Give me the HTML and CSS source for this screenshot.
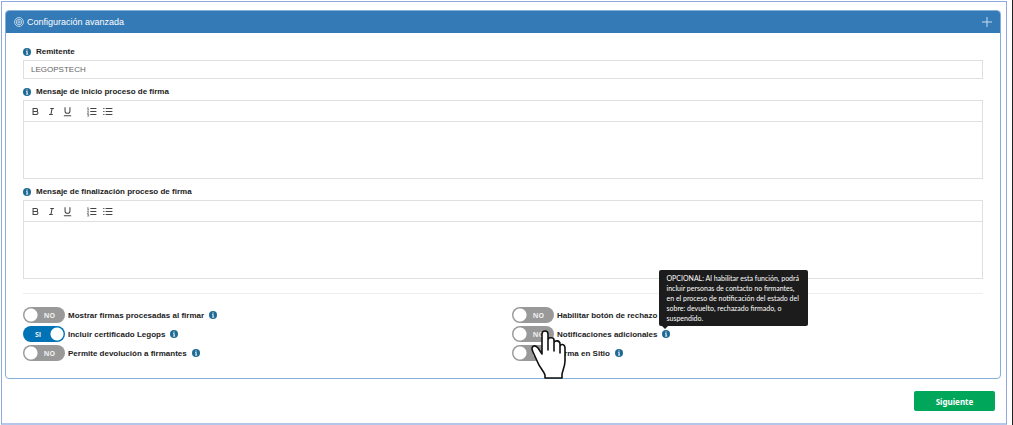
FILE: index.html
```html
<!DOCTYPE html>
<html lang="es">
<head>
    <meta charset="UTF-8">
    <meta name="viewport" content="width=device-width, initial-scale=1.0">
    <title>Configuración avanzada</title>
    <link rel="stylesheet" href="styles.css">
</head>
<body>
    <!-- Shared icons -->
    <svg class="sprite" aria-hidden="true">
        <symbol id="icon-info" viewBox="0 0 16 16">
            <circle cx="8" cy="8" r="8" fill="#1f6a94"/>
            <path d="M6 6.5h3.2v5h1.2v1.3H6v-1.3h1.2V7.800H6z M6.900 3h2.300v2.200H6.900z" fill="#fff"/>
        </symbol>
        <symbol id="icon-bold" viewBox="0 0 18 18">
            <path d="M5 4h5a2.500 2.500 0 0 1 0 5H5zM5 9h5.500a2.500 2.500 0 0 1 0 5H5z"/>
        </symbol>
        <symbol id="icon-italic" viewBox="0 0 18 18">
            <path d="M7 4h6M5 14h6M8 14l2-10"/>
        </symbol>
        <symbol id="icon-underline" viewBox="0 0 18 18">
            <path d="M5 2v6a4 4 0 0 0 8 0V2M3 16h12"/>
        </symbol>
        <symbol id="icon-ordered" viewBox="0 0 18 18">
            <path d="M7 4h10M7 9h10M7 14h10"/>
            <path d="M2 3.500l1.500-1v4M2 6.500h3M2 9h2v1.500L2 12h2.500M2 14h2.500v2.500H2" stroke-width="1"/>
        </symbol>
        <symbol id="icon-bullet" viewBox="0 0 18 18">
            <path d="M6 4h11M6 9h11M6 14h11M2 4h2M2 9h2M2 14h2"/>
        </symbol>
    </svg>

    <main class="page">
        <section class="panel">
            <header class="panel-header">
                <svg class="gear" viewBox="0 0 18 18" aria-hidden="true">
                    <circle cx="9" cy="9" r="8"/>
                    <circle cx="9" cy="9" r="5"/>
                    <circle cx="9" cy="9" r="2"/>
                </svg>
                <h1>Configuración avanzada</h1>
                <button type="button" class="expand" aria-label="Expandir">
                    <svg viewBox="0 0 10 10"><path d="M5 0v10M0 5h10"/></svg>
                </button>
            </header>

            <form class="panel-body" id="config-form">
                <div class="field">
                    <label for="remitente"><svg class="info"><use href="#icon-info"/></svg>Remitente</label>
                    <input type="text" id="remitente" class="form-control" value="LEGOPSTECH">
                </div>

                <div class="field">
                    <label for="inicio"><svg class="info"><use href="#icon-info"/></svg>Mensaje de inicio proceso de firma</label>
                    <div class="editor">
                        <div class="toolbar">
                            <button type="button" aria-label="Negrita"><svg><use href="#icon-bold"/></svg></button>
                            <button type="button" aria-label="Cursiva"><svg><use href="#icon-italic"/></svg></button>
                            <button type="button" aria-label="Subrayado"><svg><use href="#icon-underline"/></svg></button>
                            <button type="button" class="group" aria-label="Lista numerada"><svg><use href="#icon-ordered"/></svg></button>
                            <button type="button" aria-label="Lista"><svg><use href="#icon-bullet"/></svg></button>
                        </div>
                        <textarea id="inicio"></textarea>
                    </div>
                </div>

                <div class="field">
                    <label for="fin"><svg class="info"><use href="#icon-info"/></svg>Mensaje de finalización proceso de firma</label>
                    <div class="editor">
                        <div class="toolbar">
                            <button type="button" aria-label="Negrita"><svg><use href="#icon-bold"/></svg></button>
                            <button type="button" aria-label="Cursiva"><svg><use href="#icon-italic"/></svg></button>
                            <button type="button" aria-label="Subrayado"><svg><use href="#icon-underline"/></svg></button>
                            <button type="button" class="group" aria-label="Lista numerada"><svg><use href="#icon-ordered"/></svg></button>
                            <button type="button" aria-label="Lista"><svg><use href="#icon-bullet"/></svg></button>
                        </div>
                        <textarea id="fin"></textarea>
                    </div>
                </div>

                <hr>

                <div class="options">
                    <div class="option">
                        <span class="switch"><input type="checkbox" id="mostrar"><span class="state no">NO</span></span>
                        <label for="mostrar">Mostrar firmas procesadas al firmar</label>
                        <svg class="info"><use href="#icon-info"/></svg>
                    </div>
                    <div class="option">
                        <span class="switch"><input type="checkbox" id="rechazo"><span class="state no">NO</span></span>
                        <label for="rechazo">Habilitar botón de rechazo</label>
                        <svg class="info"><use href="#icon-info"/></svg>
                    </div>
                    <div class="option">
                        <span class="switch"><input type="checkbox" id="certificado" checked><span class="state si">SI</span></span>
                        <label for="certificado">Incluir certificado Legops</label>
                        <svg class="info"><use href="#icon-info"/></svg>
                    </div>
                    <div class="option">
                        <span class="switch">
                            <input type="checkbox" id="notificaciones"><span class="state no">NO</span>
                            <!-- Hand pointer over the switch -->
                            <svg class="pointer" viewBox="0 0 36 50" aria-hidden="true">
                                <path d="M14 48V45C13 41 9 38 7 33L2 22C-1 16 4 14 7 18L11 24V4C11 0 17 0 17 4V20V10C17 7 23 7 23 10V21V13C23 10 29 10 29 14V23V17C29 13 34 14 34 18V31C34 37 31 41 31 45V48Z"/>
                            </svg>
                        </span>
                        <label for="notificaciones">Notificaciones adicionales</label>
                        <span class="info-wrap">
                            <svg class="info"><use href="#icon-info"/></svg>
                            <span class="tooltip" role="tooltip">OPCIONAL: Al habilitar esta función, podrá incluir personas de contacto no firmantes, en el proceso de notificación del estado del sobre: devuelto, rechazado firmado, o suspendido.</span>
                        </span>
                    </div>
                    <div class="option">
                        <span class="switch"><input type="checkbox" id="devolucion"><span class="state no">NO</span></span>
                        <label for="devolucion">Permite devolución a firmantes</label>
                        <svg class="info"><use href="#icon-info"/></svg>
                    </div>
                    <div class="option">
                        <span class="switch"><input type="checkbox" id="sitio"><span class="state no">NO</span></span>
                        <label for="sitio">Firma en Sitio</label>
                        <svg class="info"><use href="#icon-info"/></svg>
                    </div>
                </div>
            </form>
        </section>

        <div class="actions">
            <button type="submit" form="config-form" class="btn">Siguiente</button>
        </div>
    </main>
</body>
</html>
```
FILE: styles.css
```css
:root {
    --primary-color: #337ab7;
    --success-color: #00a65a;
    --border-color: #dddfe3;
    --text-color: #222222;
}

* {
    margin: 0;
    padding: 0;
    box-sizing: border-box;
}

body {
    display: flex;
    min-height: 100vh;
    background-color: #ffffff;
    border-right: 1px solid #222222;
    color: var(--text-color);
    font-family: "Liberation Sans", Arial, sans-serif;
    font-size: 8px;
    line-height: 11px;
}

button,
input,
textarea {
    font: inherit;
}

.sprite {
    position: absolute;
    width: 0;
    height: 0;
}

.page {
    flex: 1;
    margin: 1px 5px 0 1px;
    padding: 8px 5px 0 3px;
    border: 1px solid #8fa9e0;
    border-bottom: 2px solid #b4c7ea;
}

/* Panel */
.panel {
    border: 1px solid #82b0da;
    border-radius: 4px;
}

.panel-header {
    display: flex;
    align-items: center;
    gap: 3px;
    height: 22px;
    padding: 0 8px;
    background-color: var(--primary-color);
    border-radius: 3px 3px 0 0;
    color: #ffffff;
}

.panel-header h1 {
    font-size: 9px;
    font-weight: 400;
}

.gear {
    width: 10px;
    height: 10px;
    fill: none;
    stroke: #d6e4f1;
    stroke-width: 1.5;
}

.expand {
    display: flex;
    margin-left: auto;
    background: none;
    border: none;
    cursor: pointer;
}

.expand svg {
    width: 10px;
    height: 10px;
    stroke: #c9dcee;
}

.panel-body {
    padding: 13px 17px 17px;
}

/* Fields */
.field {
    margin-bottom: 7px;
}

.field label {
    display: flex;
    align-items: center;
    gap: 5px;
    margin-bottom: 3px;
    font-weight: bold;
}

.info {
    display: block;
    flex: none;
    width: 8px;
    height: 8px;
}

.form-control {
    display: block;
    width: 100%;
    height: 19px;
    padding: 0 7px;
    border: 1px solid var(--border-color);
    color: #666666;
}

.editor {
    border: 1px solid var(--border-color);
}

.toolbar {
    display: flex;
    align-items: center;
    gap: 5px;
    height: 21px;
    padding: 0 6px;
    border-bottom: 1px solid var(--border-color);
}

.toolbar button {
    display: flex;
    background: none;
    border: none;
    cursor: pointer;
}

.toolbar svg {
    width: 11px;
    height: 11px;
    fill: none;
    stroke: #444444;
    stroke-width: 1.7;
}

.toolbar .group {
    margin-left: 8px;
}

.editor textarea {
    display: block;
    width: 100%;
    height: 56px;
    padding: 6px;
    border: none;
    outline: none;
    resize: none;
}

hr {
    margin: 14px 0 13px;
    border: none;
    border-top: 1px solid #eeeeee;
}

/* Switches */
.options {
    display: grid;
    grid-template-columns: 1fr 1fr;
    column-gap: 18px;
    row-gap: 3px;
}

.option {
    display: flex;
    align-items: center;
    height: 16px;
}

.option label {
    margin: 0 5px 0 3px;
    font-weight: bold;
}

.switch {
    position: relative;
    width: 42px;
    height: 16px;
}

.switch input {
    appearance: none;
    display: block;
    width: 42px;
    height: 16px;
    background: radial-gradient(circle at 8px 8px, #ffffff 6px, transparent 7px) #999999;
    border-radius: 8px;
    cursor: pointer;
}

.switch input:checked {
    background: radial-gradient(circle at 34px 8px, #ffffff 6px, transparent 7px) #0073b7;
}

.state {
    position: absolute;
    top: 3px;
    color: #eeeeee;
    font-family: "Open Sans", sans-serif;
    font-size: 7px;
    font-weight: bold;
    pointer-events: none;
}

.state.no {
    right: 10px;
}

.state.si {
    left: 12px;
}

.pointer {
    position: absolute;
    z-index: 2;
    top: 4px;
    left: 19px;
    width: 36px;
    height: 50px;
    fill: #ffffff;
    stroke: #111111;
    stroke-width: 1.6;
    stroke-linejoin: round;
    pointer-events: none;
}

/* Tooltip */
.info-wrap {
    position: relative;
}

.tooltip {
    position: absolute;
    z-index: 1;
    bottom: 12px;
    left: -3px;
    width: 149px;
    padding: 3px 7px;
    background-color: #1c1c1c;
    border-radius: 2px;
    color: #ffffff;
    font-family: Lato, "Noto Sans", sans-serif;
    font-size: 7px;
    line-height: 10px;
}

.tooltip::after {
    content: "";
    position: absolute;
    top: 100%;
    left: 3px;
    border: 3px solid transparent;
    border-top-color: #1c1c1c;
    border-bottom: none;
}

/* Footer */
.actions {
    display: flex;
    justify-content: flex-end;
    padding: 12px 6px;
}

.btn {
    width: 81px;
    height: 20px;
    background-color: var(--success-color);
    border: none;
    border-radius: 2px;
    color: #ffffff;
    font-family: "Noto Sans", sans-serif;
    font-weight: bold;
    cursor: pointer;
}

.btn:hover {
    background-color: #008d4c;
}
```
